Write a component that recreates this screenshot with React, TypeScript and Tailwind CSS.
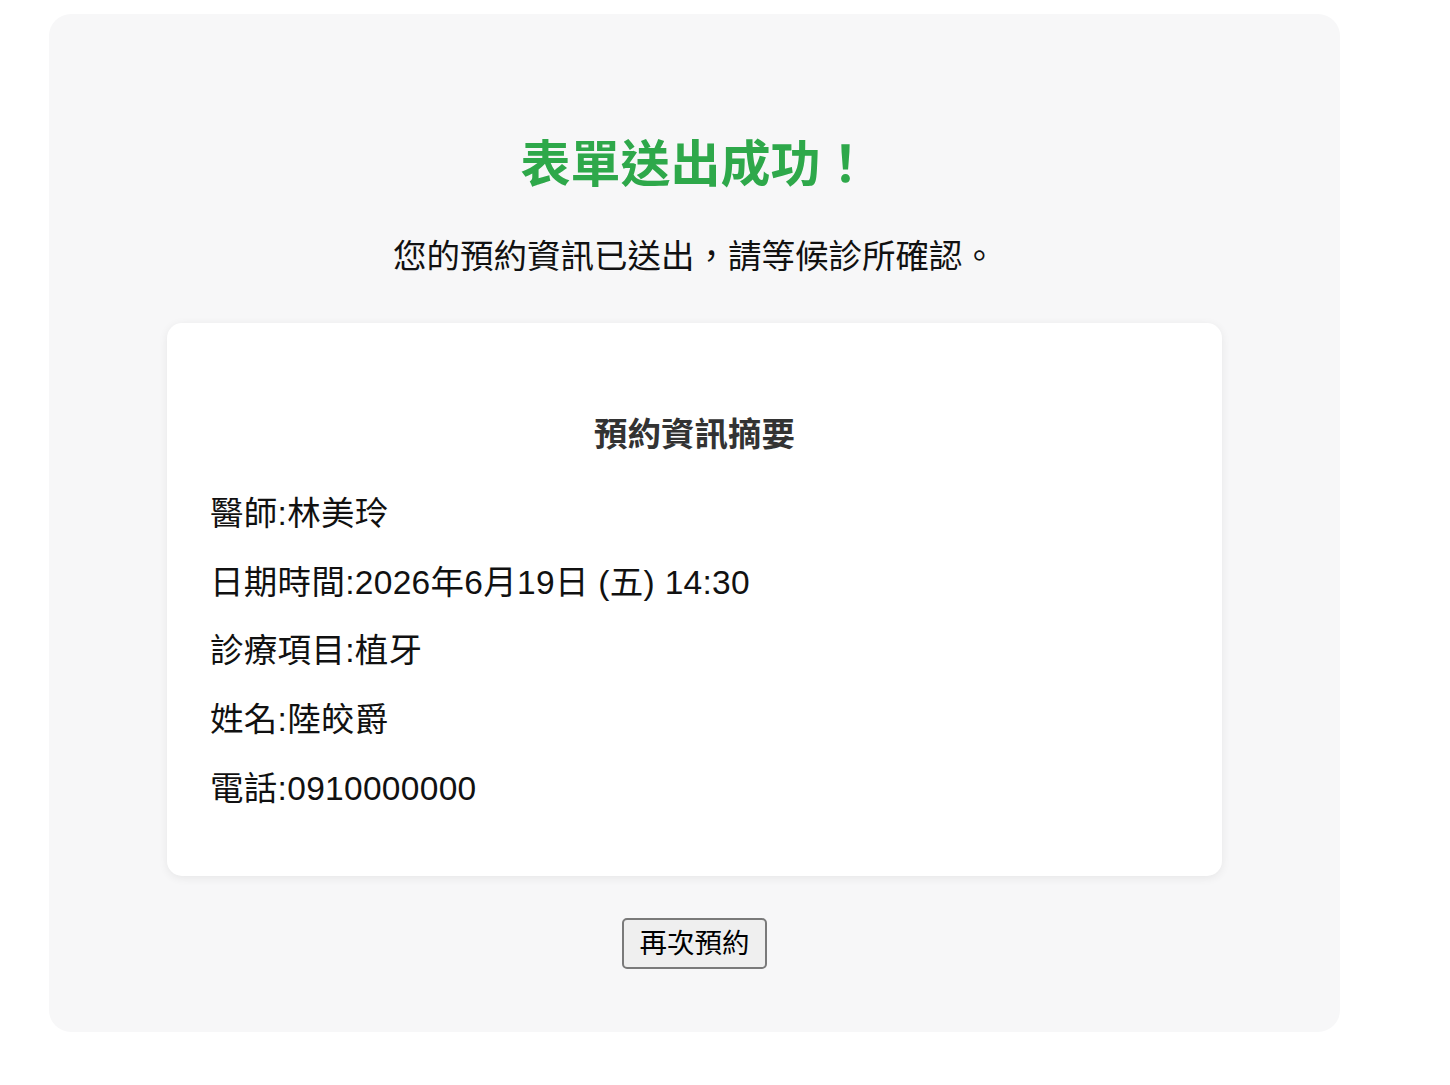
import React from "react";

const font = { fontFamily: '"Liberation Sans", "Noto Sans CJK TC", sans-serif' };

export default function App() {
  const rows = [
    "醫師:林美玲",
    "日期時間:2026年6月19日 (五) 14:30",
    "診療項目:植牙",
    "姓名:陸皎爵",
    "電話:0910000000",
  ];
  return (
    <div className="min-h-[1085px] bg-white pt-[14px] pl-[49px]" style={font}>
      <div className="w-[1291px] rounded-[22px] bg-[#f7f7f8] pt-[121px] pb-[63px] px-[118px] flex flex-col items-center">
        <h1 className="text-[50px] leading-[60px] font-bold text-[#2ea84a] pl-[2px]">表單送出成功！</h1>
        <p className="mt-[42px] text-[33.5px] leading-[40px] text-[#111]">您的預約資訊已送出，請等候診所確認。</p>
        <div className="mt-[46px] w-full rounded-[15px] bg-white shadow-[0_2px_10px_rgba(0,0,0,0.07)] pt-[92px] pb-[67px] px-[43px]">
          <h3 className="text-center text-[33.5px] leading-[40px] font-bold text-[#333]">預約資訊摘要</h3>
          <div className="mt-[39px] flex flex-col gap-[28.7px]">
            {rows.map((r) => (
              <p key={r} className="text-[33.5px] leading-[40px] text-[#111] tracking-[0.3px]">{r}</p>
            ))}
          </div>
        </div>
        <button className="mt-[42px] w-[145px] h-[51px] rounded-[5px] border-2 border-[#7a7a7a] bg-[#efefef] text-[27.5px] text-black flex items-center justify-center">
          再次預約
        </button>
      </div>
    </div>
  );
}
